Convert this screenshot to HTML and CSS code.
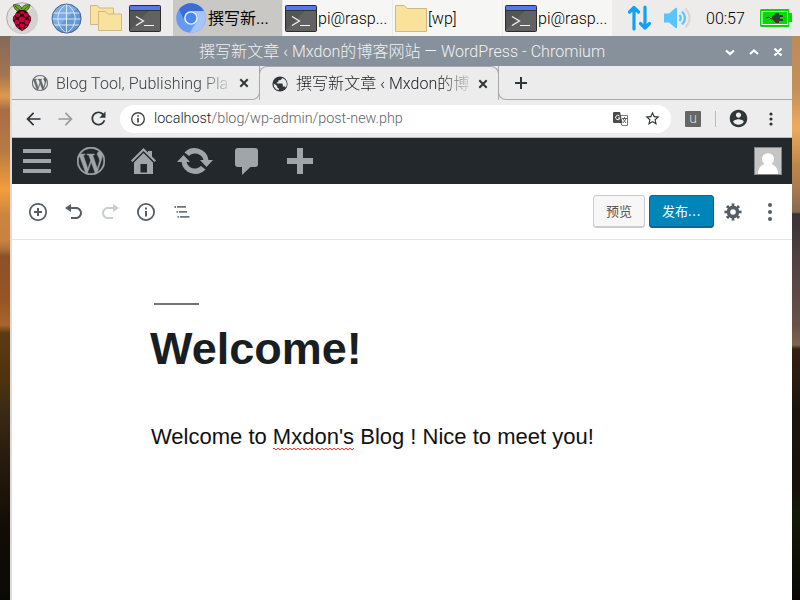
FILE: index.html
```html
<!DOCTYPE html>
<html lang="zh-CN">
<head>
<meta charset="utf-8">
<title>撰写新文章</title>
<link rel="stylesheet" href="styles.css">
</head>
<body>
<svg width="0" height="0" class="defs">
  <defs>
    <symbol id="wp" viewBox="0 0 24 24"><path d="M21.469 6.825c.84 1.537 1.318 3.3 1.318 5.175 0 3.979-2.156 7.456-5.363 9.325l3.295-9.527c.615-1.54.82-2.771.82-3.864 0-.405-.026-.78-.07-1.11m-7.981.105c.647-.03 1.232-.105 1.232-.105.582-.075.514-.93-.067-.899 0 0-1.755.135-2.88.135-1.064 0-2.85-.15-2.85-.15-.585-.03-.661.855-.075.885 0 0 .54.061 1.125.09l1.68 4.605-2.37 7.08L5.354 6.9c.649-.03 1.234-.1 1.234-.1.585-.075.516-.93-.065-.896 0 0-1.746.138-2.874.138-.2 0-.438-.008-.69-.015C4.911 3.15 8.235 1.215 12 1.215c2.809 0 5.365 1.072 7.286 2.833-.046-.003-.091-.009-.141-.009-1.06 0-1.812.923-1.812 1.914 0 .89.513 1.643 1.06 2.531.411.72.89 1.643.89 2.977 0 .915-.354 1.994-.821 3.479l-1.075 3.585-3.9-11.61.001.014zM12 22.784c-1.059 0-2.081-.153-3.048-.437l3.237-9.406 3.315 9.087c.024.053.05.101.078.149-1.12.393-2.325.609-3.582.609M1.211 12c0-1.564.336-3.05.935-4.39L7.29 21.709C3.694 19.96 1.212 16.271 1.211 12M12 0C5.385 0 0 5.385 0 12s5.385 12 12 12 12-5.385 12-12S18.615 0 12 0"/></symbol>
    <symbol id="terminal" viewBox="0 0 32 27"><rect x=".5" y=".5" width="31" height="26" rx="1" fill="#555" stroke="#2c2c2c"/><path d="M20 6h11v20H1v-1z" fill="#626262"/><path d="M1 1h30v4.500H1z" fill="#5877e8"/><path d="M1 5.500h30" stroke="#333"/><path d="M7 11.500l7.500 4.500L7 20.500M15 20.500h10" fill="none" stroke="#f4f4f4" stroke-width="1.200"/></symbol>
    <symbol id="folder" viewBox="0 0 32 27"><path d="M.5 26.500V.500h9l2.500 3h19.500v23z" fill="#f8e29c" stroke="#d2b688"/></symbol>
  </defs>
</svg>

<header class="panel">
  <svg class="raspberry" width="32" height="32" viewBox="0 0 32 32"><circle cx="16" cy="16" r="15.300" fill="#e0e0e0" stroke="#aaa"/><path d="M6 28L27 5a15 15 0 0 1-21 23z" fill="#d2d2d2"/><g transform="translate(0 1)"><path d="M15.500 8.500C11 9 8 6 7.500 1.800c4-.5 7.500.5 8.300 4 .8-3.500 4.200-4.500 8.200-4C23.500 6 20.500 9 16.200 8.500z" fill="#75a928" stroke="#24380c" stroke-width=".8"/><path d="M9 3l6 5M22.500 3l-6 5" stroke="#315014" stroke-width=".8"/><path d="M16 7c4 0 6 2 7 5 3 2 2.500 6 .5 8-1 4-4 6-7.500 8-3.500-2-6.500-4-7.500-8-2-2-2.500-6 .5-8 1-3 3-5 7-5z" fill="#200008"/><g fill="#c7053d"><ellipse cx="16" cy="9.500" rx="2.600" ry="1.500"/><ellipse cx="11.800" cy="12" rx="2.600" ry="2"/><ellipse cx="20.200" cy="12" rx="2.600" ry="2"/><circle cx="16" cy="16.500" r="3"/><circle cx="10.900" cy="19.300" r="2.500"/><circle cx="21.100" cy="19.300" r="2.500"/><ellipse cx="8.400" cy="15.400" rx="1.200" ry="2.100"/><ellipse cx="23.600" cy="15.400" rx="1.200" ry="2.100"/><ellipse cx="16" cy="22.300" rx="2.800" ry="1.900"/><ellipse cx="11.800" cy="23.700" rx="1.500" ry="1.100"/><ellipse cx="20.200" cy="23.700" rx="1.500" ry="1.100"/><ellipse cx="16" cy="26" rx="2" ry="1"/></g></g></svg>
  <svg class="globe" width="31" height="31" viewBox="0 0 31 31"><circle cx="15.500" cy="15.500" r="14.500" fill="#7cabe5"/><path d="M5 26L26 5A14.500 14.500 0 0 1 5 26z" fill="#6597d0"/><path d="M2 10h27M2 22h27M1 16h29M15.500 1v29M15.500 1C4 8 4 23 15.500 30M15.500 1C27 8 27 23 15.500 30" fill="none" stroke="#e3eefc" stroke-width=".9"/><circle cx="15.500" cy="15.500" r="14.500" fill="none" stroke="#426692"/></svg>
  <svg class="files" width="32" height="27" viewBox="0 0 32 27"><path d="M.5 19.500V.500h7l2 2.500h14v16.500z" fill="#f8e29c" stroke="#d2b688"/><path d="M8.500 25.500V6.500h7l2 2.500h14v16.500z" fill="#f8e29c" stroke="#d2b688"/></svg>
  <svg class="term" width="32" height="27"><use href="#terminal"/></svg>
  <nav class="tasks">
    <div class="task active"><svg class="chromium" width="30" height="30" viewBox="0 0 30 30"><circle cx="15" cy="15" r="14.800" fill="#649af5"/><path d="M3 6.500A14.800 14.800 0 0 1 28 8H15a7 7 0 0 0-6.500 9.500z" fill="#3d6cd5"/><path d="M28 8a14.800 14.800 0 0 1-14.500 21.700L21 18.500A7 7 0 0 0 19 9.300L15 8z" fill="#a4c4fa"/><circle cx="15" cy="15" r="6.800" fill="#eef4ff"/><circle cx="15" cy="15" r="5.400" fill="#4787ee"/></svg><span class="cjk-task">撰写新...</span></div>
    <div class="task"><svg width="32" height="27"><use href="#terminal"/></svg><span>pi@rasp...</span></div>
    <div class="task"><svg width="32" height="27"><use href="#folder"/></svg><span>[wp]</span></div>
    <div class="task"><svg width="32" height="27"><use href="#terminal"/></svg><span>pi@rasp...</span></div>
  </nav>
  <svg class="net" width="26" height="26" viewBox="0 0 26 26"><path d="M7 24V3M2.500 7L7 2.500 11.500 7M18 2v21M13.500 18.500L18 23l4.500-4.500" fill="none" stroke="#12a1f5" stroke-width="3.200" stroke-linecap="round" stroke-linejoin="round"/></svg>
  <svg class="sound" width="27" height="22" viewBox="0 0 27 22"><path d="M0 6.500h5L11.500 1q1.500-1 1.500 1v18q0 2-1.500 1L5 15.500H0z" fill="#5ac5fc"/><path d="M15.500 8q2.500 3 0 6M18 4.500q6 6.500 0 13" fill="none" stroke="#5ac5fc" stroke-width="2.200"/><path d="M21.500 1.500q8 9.500 0 19" fill="none" stroke="#d5d7d8" stroke-width="2"/></svg>
  <span class="clock">00:57</span>
  <svg class="battery" width="32" height="18" viewBox="0 0 32 18"><path d="M1 0h28v4h3v9h-3v5H1l-1-1V1z" fill="#07d707"/><rect x="2" y="2.500" width="25.500" height="13" fill="#05d905" stroke="#fff"/><path d="M6 9l3-1 2 2 3-1" fill="none" stroke="#154b13"/><path d="M12 8l4-4h3v2h4v2h-3v2h3v2h-4v2h-3l-4-4z" fill="#383838"/></svg>
</header>

<main class="window">
  <div class="titlebar">
    <h1>撰写新文章 ‹ Mxdon的博客网站 — WordPress - Chromium</h1>
    <svg class="controls" width="60" height="12" viewBox="0 0 60 12" fill="none" stroke="#fff" stroke-width="2.300"><path d="M2 4.500L6 8l4-3.500M26 8l4-3.500L34 8M50.500 2.500l7 7M57.500 2.500l-7 7"/></svg>
  </div>

  <div class="client">
  <div class="tabs">
    <div class="tab first"><svg width="16" height="16" fill="#65696b" stroke="#65696b" stroke-width=".5"><use href="#wp"/></svg><span class="name">Blog Tool, Publishing Pla</span><svg class="x" width="10" height="10" viewBox="0 0 10 10"><path d="M1.300 1.300l7.400 7.400M8.700 1.300L1.300 8.700"/></svg></div>
    <div class="tab current"><svg width="16" height="16" viewBox="2 2 20 20"><circle cx="12" cy="12" r="9.500" fill="#2f3638"/><path fill="#ececec" d="M14.500 4.500C14 7 12 7.500 9.800 7.500v2.200H8v1.800h6.200q1.300 0 1.300 1.300v2.200h1.800c1 0 1.500.6 2 1.400 1-1.500 1.200-3 1.200-4.400 0-3.300-2-6.300-6-7.500zM4.200 11.500c-.5 4 2 7.800 6.300 8.300v-2.500c-1.200 0-2-.7-2-2v-.8z"/></svg><span class="name">撰写新文章 ‹ Mxdon的博</span><svg class="x" width="10" height="10" viewBox="0 0 10 10"><path d="M1.300 1.300l7.400 7.400M8.700 1.300L1.300 8.700"/></svg></div>
    <div class="tab rest"><svg class="x" width="12" height="12" viewBox="0 0 12 12"><path d="M6 0v12M0 6h12"/></svg></div>
  </div>

  <div class="toolbar">
    <svg class="back" width="20" height="20" viewBox="0 0 24 24"><path d="M21 11H7.830l5.590-5.590L12 4l-8 8 8 8 1.410-1.410L7.830 13H21v-2z"/></svg>
    <svg class="fwd" width="20" height="20" viewBox="0 0 24 24"><path d="M3 11h13.170l-5.590-5.590L12 4l8 8-8 8-1.410-1.410L16.170 13H3v-2z"/></svg>
    <svg class="reload" width="21" height="21" viewBox="0 0 24 24"><path d="M17.650 6.350C16.200 4.900 14.210 4 12 4c-4.420 0-7.990 3.580-7.990 8s3.570 8 7.990 8c3.730 0 6.840-2.550 7.730-6h-2.080c-.82 2.330-3.040 4-5.650 4-3.310 0-6-2.690-6-6s2.690-6 6-6c1.660 0 3.140.69 4.220 1.780L13 11h7V4l-2.350 2.350z"/></svg>
    <div class="omnibox">
      <svg width="14" height="14" viewBox="0 0 14 14"><circle cx="7" cy="7" r="6.300" fill="none" stroke="#444" stroke-width="1.400"/><path d="M6.200 3.300h1.600v1.500H6.200zM6.200 6h1.600v4.600H6.200z"/></svg>
      <span class="url">localhost<i>/blog/wp-admin/post-new.php</i></span>
      <svg class="translate" width="15" height="14" viewBox="0 0 15 14"><path d="M7 3.500h7.500v10H9" fill="#fff" stroke="#777"/><path d="M1 0h6l2.500 11H1q-1 0-1-1V1q0-1 1-1z" fill="#4b4b4b"/><path d="M6.500 4A2.200 2.200 0 1 0 7 6H5" stroke="#fff" fill="none"/><path d="M9 6.500h5M11.500 5v1.500M10 7l3 4M13 7l-3 4M8 11l1 2.500" stroke="#666" fill="none"/></svg>
      <svg class="star" width="17" height="17" viewBox="0 0 24 24"><path d="M22 9.240l-7.190-.62L12 2 9.190 8.630 2 9.240l5.460 4.730L5.820 21 12 17.270 18.180 21l-1.630-7.030L22 9.240zM12 15.400l-3.760 2.270 1-4.280-3.320-2.880 4.380-.38L12 6.100l1.710 4.040 4.380.38-3.320 2.880 1 4.280L12 15.400z"/></svg>
    </div>
    <span class="ext">u</span>
    <span class="sep"></span>
    <svg class="user" width="21" height="21" viewBox="0 0 24 24"><path d="M12 2C6.480 2 2 6.480 2 12s4.480 10 10 10 10-4.480 10-10S17.520 2 12 2zm0 3c1.660 0 3 1.340 3 3s-1.340 3-3 3-3-1.340-3-3 1.340-3 3-3zm0 14.200c-2.500 0-4.710-1.280-6-3.220.030-1.990 4-3.080 6-3.080 1.990 0 5.970 1.090 6 3.080-1.290 1.940-3.500 3.220-6 3.220z"/></svg>
    <svg class="kebab" width="4" height="14" viewBox="0 0 4 14"><circle cx="2" cy="2" r="1.600"/><circle cx="2" cy="7" r="1.600"/><circle cx="2" cy="12" r="1.600"/></svg>
  </div>

  <div class="adminbar">
    <svg width="28" height="24" viewBox="0 0 28 24"><path d="M0 0h28v4H0zM0 10h28v4H0zM0 20h28v4H0z"/></svg>
    <svg class="a-wp" width="28" height="28" stroke="#a0a5aa" stroke-width=".4"><use href="#wp"/></svg>
    <svg class="a-home" width="25" height="26" viewBox="0 0 25 26"><path d="M12.500 0L17 4.500V3h4v5.500l4 4-1.500 1.500-11-11-11 11L0 12.500z"/><path fill-rule="evenodd" d="M12.500 5L22 14.500V26H3V14.500zM9.500 16v8.500h6.500V16z"/></svg>
    <svg class="a-update" width="36" height="28" viewBox="0 0 36 28"><path d="M7.500 5.500A14 14 0 0 1 31.500 13H36l-6.500 7-6.500-7h3.500A8.700 8.700 0 0 0 12 9zM28.500 22.500A14 14 0 0 1 4.500 15H0l6.500-7 6.500 7H9.500a8.700 8.700 0 0 0 14.500 4z"/></svg>
    <svg class="a-comment" width="23" height="27" viewBox="0 0 23 27"><path d="M3 0h17q3 0 3 3v13q0 3-3 3h-4.500L7 27v-8H3q-3 0-3-3V3q0-3 3-3z"/></svg>
    <svg class="a-plus" width="26" height="26" viewBox="0 0 26 26"><path d="M10 0h6v10h10v6H16v10h-6V16H0v-6h10z"/></svg>
    <svg class="avatar" width="28" height="28" viewBox="0 0 28 28"><rect x=".5" y=".5" width="27" height="27" fill="#c5c5c5" stroke="#82878c"/><path fill="#fff" d="M4 27c0-6 3-8.500 6.500-10A6 6 0 1 1 17.500 17c3.500 1.500 6.500 4 6.500 10z"/></svg>
  </div>

  <div class="editbar">
    <svg width="20" height="20" viewBox="0 0 20 20"><path d="M10 1c-5 0-9 4-9 9s4 9 9 9 9-4 9-9-4-9-9-9zm0 16.300c-4 0-7.300-3.200-7.300-7.300S6 2.700 10 2.700s7.300 3.200 7.300 7.300-3.200 7.300-7.300 7.300zm1-11.300H9v3H6v2h3v3h2v-3h3V9h-3V6z"/></svg>
    <svg width="20" height="20" viewBox="0 0 20 20"><path d="M12 5H7V2L1 6l6 4V7h5c2.200 0 4 1.800 4 4s-1.800 4-4 4H7v2h5c3.300 0 6-2.700 6-6s-2.700-6-6-6z"/></svg>
    <svg class="faded" width="20" height="20" viewBox="0 0 20 20"><path d="M8 5h5V2l6 4-6 4V7H8c-2.200 0-4 1.800-4 4s1.800 4 4 4h5v2H8c-3.300 0-6-2.700-6-6s2.700-6 6-6z"/></svg>
    <svg width="20" height="20" viewBox="0 0 20 20"><circle cx="10" cy="10" r="8.100" fill="none" stroke="#555d66" stroke-width="1.800"/><path d="M9 5.500h2v2H9zM9 9h2v5.500H9z"/></svg>
    <svg width="20" height="20" viewBox="0 0 20 20" class="outline"><path d="M2.500 4H4v2H2.500zM5 4h9v1.700H5zM4.500 9H6v1.700H4.500zM7 9h8v1.700H7zM5.500 14H7v1.700H5.500zM8 14h9.500v1.700H8z"/></svg>
    <button class="preview">预览</button>
    <button class="publish">发布<span class="dots">...</span></button>
    <svg class="gear" width="18" height="18" viewBox="0 0 18 18" fill="none" stroke="#555d66"><circle cx="9" cy="9" r="4.600" stroke-width="3.600"/><circle cx="9" cy="9" r="7.200" stroke-width="2.800" pathLength="80" stroke-dasharray="4.800 5.200" stroke-dashoffset="2.400"/></svg>
    <svg class="more" width="6" height="18" viewBox="0 0 6 18"><circle cx="3" cy="2" r="2"/><circle cx="3" cy="9" r="2"/><circle cx="3" cy="16" r="2"/></svg>
  </div>

  <article class="post">
    <hr>
    <h2>Welcome!</h2>
    <p>Welcome to <span class="typo">Mxdon's</span> Blog ! Nice to meet you!</p>
  </article>
  </div>
</main>
</body>
</html>
```
FILE: styles.css
```css
* { box-sizing: border-box; }

body {
  margin: 0;
  width: 800px;
  height: 600px;
  overflow: hidden;
  font-family: Roboto, "Noto Sans CJK SC", sans-serif;
  font-size: 16px;
  background:
    linear-gradient(#85695a 36px, #a3754f 75px, #e0984e 96px, #a66e46 110px, #b87a43 150px, #f59d39 190px, #cb853f 215px, #c9823f 240px, #b07038 249px, #8b5127 256px, #975524 300px, #a8652c 325px, #5b3b12 333px, #4e320e 380px, #3b2a15 410px, #291c0f 455px, #120c05 530px, #0a0a05 600px) 0 0 / 14px 600px no-repeat,
    linear-gradient(#bc8c59 36px, #c29059 90px, #edac5b 127px, #bd8748 165px, #a67a51 190px, #85694e 212px, #3a3136 214px, #504143 260px, #68514a 325px, #806251 345px, #35210f 349px, #21170e 400px, #1a1410 410px, #19110a 490px, #151b08 510px, #090706 600px) 788px 0 / 12px 600px no-repeat;
}

svg { display: block; flex: none; }
.defs { position: absolute; }

.panel {
  display: flex;
  align-items: center;
  height: 36px;
  padding-left: 6px;
  background: #edeceb;
  font-weight: 300;
  color: #000;
}
.globe { margin-left: 13px; }
.files { margin-left: 8px; }
.term { margin-left: 7px; }
.tasks {
  display: grid;
  grid-template-columns: repeat(4, 110px);
  width: 440px;
  height: 36px;
  margin-left: 12px;
}
.task {
  display: flex;
  align-items: center;
  padding-left: 2px;
  background: #f6f6f4;
  border-right: 1px solid #ecebea;
  white-space: nowrap;
}
.task.active { background: #cac8c4; padding-left: 3px; }
.task span { margin-left: 1px; }
.task .cjk-task { margin: -2px 0 0 2px; font-weight: 400; }
.net { margin-left: 14px; }
.sound { margin-left: 11px; }
.clock { width: 54px; margin-left: 15px; }

.window {
  width: 782px;
  height: 564px;
  margin-left: 10px;
  overflow: hidden;
  border-radius: 3px 3px 0 0;
}
.client {
  height: 534px;
  background: #fff;
  border-left: 2px solid #dcdcdc;
}

.titlebar {
  display: flex;
  align-items: center;
  height: 30px;
  padding: 2px 8px 0 189px;
  background: #87919b;
}
.titlebar h1 {
  flex: 1;
  margin: 0;
  font-size: 16px;
  font-weight: 300;
  line-height: 28px;
  letter-spacing: .05px;
  color: #f2f2f2;
  white-space: nowrap;
}

.tabs { display: flex; height: 34px; background: #ececec; }
.tab {
  display: flex;
  align-items: center;
  height: 34px;
  border-bottom: 1px solid #a9a9a9;
  font-weight: 300;
  color: #3c4043;
}
.first { width: 248px; padding-left: 20px; border-right: 1px solid #a9a9a9; border-bottom-right-radius: 8px; }
.current {
  width: 240px;
  margin-left: -1px;
  padding-left: 12px;
  border: 1px solid #a9a9a9;
  border-bottom: 0;
  border-radius: 8px 8px 0 0;
  color: #202124;
}
.rest { flex: 1; margin-left: -1px; padding-left: 16px; border-left: 1px solid #a9a9a9; border-bottom-left-radius: 8px; }
.name {
  width: 175px;
  margin: 1px 8px 0;
  overflow: hidden;
  white-space: nowrap;
  letter-spacing: .05px;
  -webkit-mask-image: linear-gradient(90deg, #000 145px, transparent 178px);
  mask-image: linear-gradient(90deg, #000 145px, transparent 178px);
}
.current .name { margin: -3px 7px 0 8px; }
.x { fill: none; stroke: #2f3638; stroke-width: 2; }

.toolbar {
  display: flex;
  align-items: center;
  height: 38px;
  padding-left: 11px;
  background: #ededed;
  border-bottom: 1px solid #bcbcbc;
  fill: #2f3638;
}
.fwd { margin-left: 13px; fill: #9b9b9b; }
.reload { margin-left: 12px; }
.omnibox {
  display: flex;
  align-items: center;
  width: 551px;
  height: 28px;
  margin-left: 11px;
  padding-left: 11px;
  background: #fff;
  border-radius: 14px;
}
.url { width: 459px; margin-left: 9px; font-size: 14.360px; font-weight: 300; color: #202124; }
.url i { font-style: normal; color: #5f6368; }
.star { margin-left: 16px; }
.ext {
  width: 16px;
  height: 16px;
  margin-left: 14px;
  background: #666;
  border-radius: 1px;
  color: #ddd;
  font-size: 14px;
  font-weight: 300;
  line-height: 15px;
  text-align: center;
}
.sep { width: 1px; height: 16px; margin-left: 14px; background: #bbb; }
.user { margin-left: 12px; }
.kebab { margin-left: 20px; }

.adminbar {
  display: flex;
  align-items: center;
  height: 46px;
  padding-left: 11px;
  background: #23282d;
  fill: #a0a5aa;
}
.a-wp { margin-left: 26px; }
.a-home { margin-left: 26px; }
.a-update { margin-left: 21px; }
.a-comment { margin-left: 22px; }
.a-plus { margin-left: 29px; }
.avatar { margin-left: 441px; }

.editbar {
  display: flex;
  align-items: center;
  gap: 16px;
  height: 56px;
  padding-left: 16px;
  border-bottom: 1px solid #e2e4e7;
  fill: #555d66;
}
.faded { opacity: .3; }
.outline { opacity: .85; }
button {
  height: 33px;
  padding: 0 0 3px;
  border-radius: 3px;
  font: 13px "Noto Sans CJK SC", sans-serif;
}
.preview {
  width: 52px;
  margin-left: 385px;
  background: #f7f7f7;
  border: 1px solid #ccc;
  box-shadow: inset 0 -1px 0 #ccc;
  color: #555;
}
.publish {
  width: 65px;
  margin-left: -12px;
  background: #0085ba;
  border: 1px solid #006a95;
  box-shadow: inset 0 -1px 0 #006a95;
  color: #fff;
}
.dots { letter-spacing: .7px; }
.gear { margin-left: -6px; }
.more { margin-left: 9px; }

.post {
  padding: 63px 0 0 139px;
  font-family: "Liberation Sans", sans-serif;
}
.post hr {
  width: 45px;
  height: 2px;
  margin: 0 0 0 3px;
  border: 0;
  background: #767676;
}
.post h2 {
  margin: 18px 0 0 -1px;
  font-size: 45px;
  line-height: 52px;
  color: #191e23;
}
.post p { margin: 47px 0 0; font-size: 22px; line-height: 30px; color: #111; }
.typo {
  padding-bottom: 1px;
  background:
    linear-gradient(45deg, transparent 35%, #f33 35% 65%, transparent 65%) 0 100% / 4px 2px repeat-x,
    linear-gradient(-45deg, transparent 35%, #f33 35% 65%, transparent 65%) 2px 100% / 4px 2px repeat-x;
}
```
